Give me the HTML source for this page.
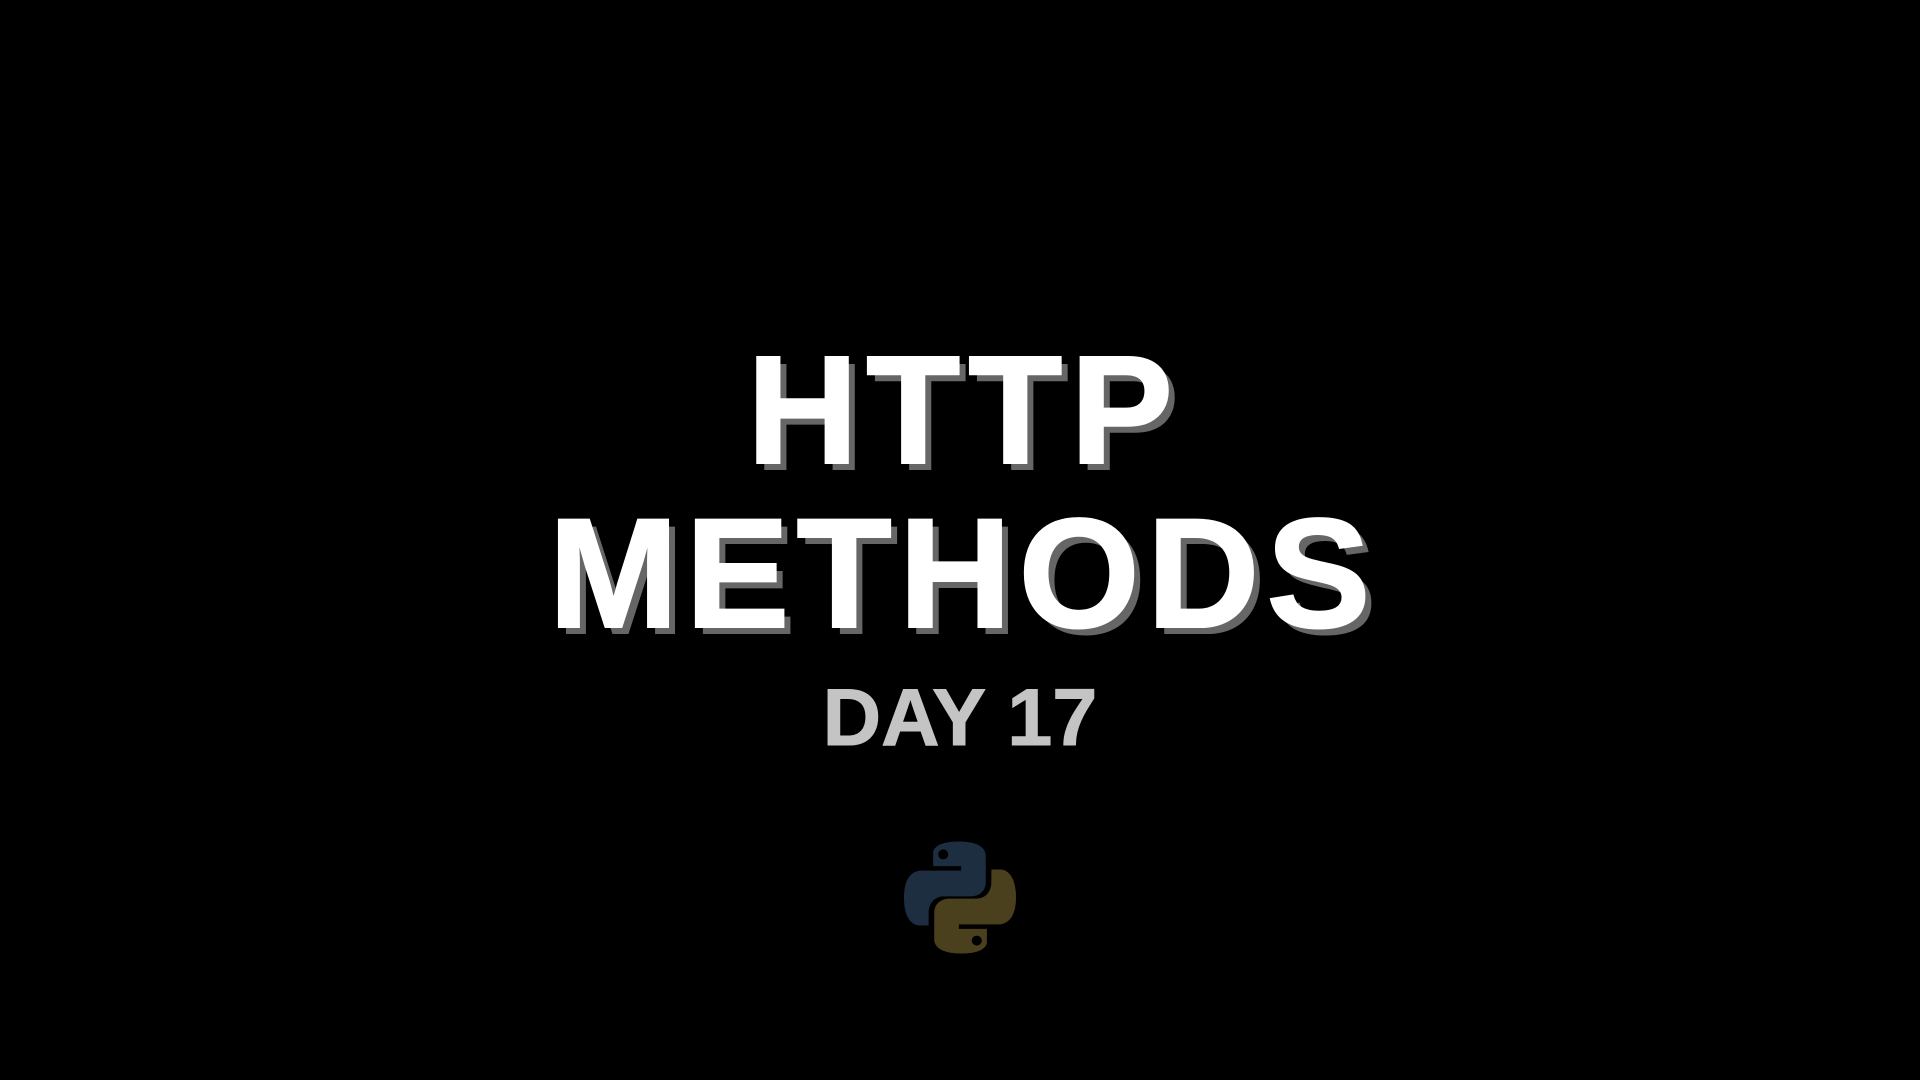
<!DOCTYPE html>
<html><head><meta charset="utf-8"><style>
html,body{margin:0;padding:0;background:#000;width:1920px;height:1080px;overflow:hidden}
.t{position:absolute;left:0;width:1920px;text-align:center;font-family:"Liberation Sans",sans-serif;font-weight:bold;line-height:1;white-space:nowrap}
.big{color:#fff;text-shadow:7px 7px 0 #666;-webkit-text-stroke:2px #fff}
</style></head><body>
<div class="t big" style="top:333px;font-size:154px;letter-spacing:8px;text-indent:8px">HTTP</div>
<div class="t big" style="top:496px;font-size:156px;letter-spacing:7px;text-indent:6px">METHODS</div>
<div class="t" style="top:678px;font-size:81px;color:#c4c4c4;letter-spacing:0px;text-indent:0px;-webkit-text-stroke:1px #c4c4c4">DAY 17</div>
<svg style="position:absolute;left:904px;top:840px" width="112" height="115" viewBox="0 0 100 100">
<path fill="#1c2e40" d="M49 0C24 0 26 11 26 11L26 22L51 22L51 26L16 26C16 26 0 24 0 50C0 76 14 75 14 75L22 75L22 63C22 63 22 49 36 49L60 49C60 49 73 49 73 36L73 13C73 13 75 0 49 0ZM35 7A4.5 4.5 0 1 1 35 16A4.5 4.5 0 1 1 35 7Z"/>
<path fill="#4b401d" d="M51 100C76 100 74 89 74 89L74 78L49 78L49 74L84 74C84 74 100 76 100 50C100 24 86 25 86 25L78 25L78 37C78 37 78 51 64 51L40 51C40 51 27 51 27 64L27 87C27 87 25 100 51 100ZM65 93A4.5 4.5 0 1 1 65 84A4.5 4.5 0 1 1 65 93Z"/>
</svg>
</body></html>
